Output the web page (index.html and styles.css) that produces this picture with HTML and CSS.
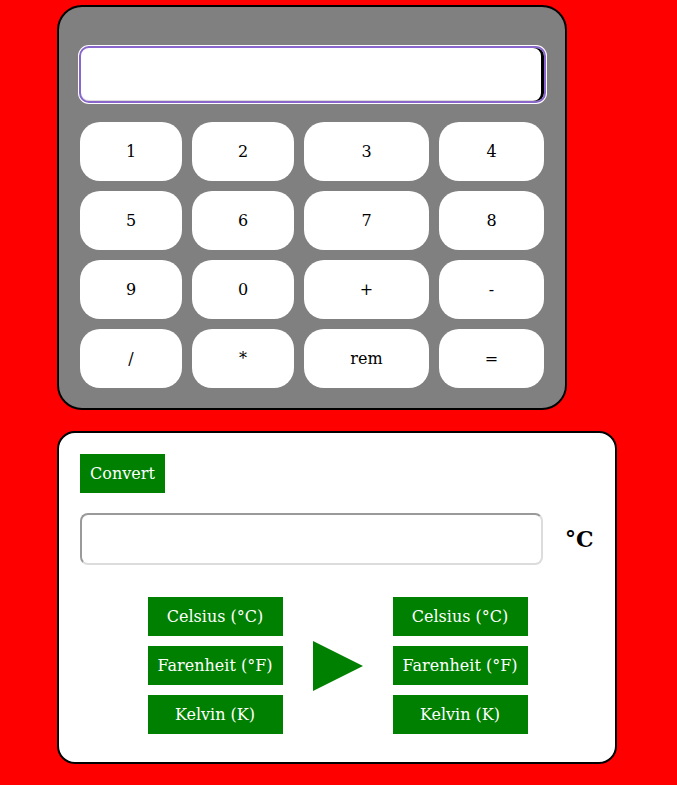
FILE: index.html
```html
<!DOCTYPE html>
<html lang="en">
<head>
<meta charset="utf-8">
<title>Calculator and Converter</title>
<link rel="stylesheet" href="styles.css">
</head>
<body>
<div class="page">
  <div class="calc">
    <input class="display" type="text" aria-label="display">
    <div class="keys">
      <button class="key">1</button>
      <button class="key">2</button>
      <button class="key">3</button>
      <button class="key">4</button>
      <button class="key">5</button>
      <button class="key">6</button>
      <button class="key">7</button>
      <button class="key">8</button>
      <button class="key">9</button>
      <button class="key">0</button>
      <button class="key">+</button>
      <button class="key">-</button>
      <button class="key">/</button>
      <button class="key">*</button>
      <button class="key">rem</button>
      <button class="key">=</button>
    </div>
  </div>
  <div class="conv">
    <button class="convert-btn">Convert</button>
    <div class="value-row">
      <input class="value" type="text" aria-label="value">
      <span class="unit">°C</span>
    </div>
    <div class="unit-row">
      <div class="unit-col">
        <button class="unit-btn">Celsius (°C)</button>
        <button class="unit-btn">Farenheit (°F)</button>
        <button class="unit-btn">Kelvin (K)</button>
      </div>
      <svg class="arrow" width="50" height="50" viewBox="0 0 50 50"><polygon points="0,0 50,25 0,50" fill="#008000"/></svg>
      <div class="unit-col">
        <button class="unit-btn">Celsius (°C)</button>
        <button class="unit-btn">Farenheit (°F)</button>
        <button class="unit-btn">Kelvin (K)</button>
      </div>
    </div>
  </div>
</div>
</body>
</html>
```
FILE: styles.css
```css
html, body {
  margin: 0;
  background: #ff0000;
  font-family: "DejaVu Serif", serif;
}

.page {
  display: flex;
  flex-direction: column;
  align-items: flex-start;
  gap: 21px;
  padding: 5px 0 0 57px;
}

.calc {
  box-sizing: border-box;
  width: 510px;
  border: 2px solid #000;
  border-radius: 25px;
  background: #808080;
  padding: 38px 21px 20px 21px;
}

.display {
  display: block;
  box-sizing: border-box;
  width: 467px;
  height: 57px;
  margin: 1px 0 19px -1px;
  padding: 0;
  border: 2px solid #8866cc;
  border-radius: 10px;
  background: #fff;
  box-shadow: 0 0 0 1px #fff, inset -3px 0 0 #000, inset 0 -1px 0 #dddddd;
  outline: none;
}

.keys {
  display: grid;
  grid-template-columns: 102px 102px 125px 105px;
  gap: 10px;
}

.key {
  height: 59px;
  border: none;
  border-radius: 20px;
  background: #fff;
  color: #000;
  font: 16px "DejaVu Serif", serif;
  padding: 0;
}

.conv {
  box-sizing: border-box;
  width: 560px;
  border: 2px solid #000;
  border-radius: 18px;
  background: #fff;
  padding: 21px 20px 28px 21px;
}

.convert-btn {
  display: block;
  width: 85px;
  height: 39px;
  border: none;
  padding: 0;
  background: #008000;
  color: #fff;
  font: 16px "DejaVu Serif", serif;
}

.value-row {
  display: flex;
  align-items: center;
  gap: 22px;
  margin-top: 20px;
}

.value {
  box-sizing: border-box;
  width: 463px;
  height: 52px;
  padding: 0;
  border: 2px solid;
  border-color: #9a9a9a #dcdcdc #dcdcdc #9a9a9a;
  border-radius: 8px;
  background: #fff;
  outline: none;
}

.unit {
  font: bold 22px "DejaVu Serif", serif;
  color: #000;
}

.unit-row {
  display: flex;
  justify-content: center;
  align-items: center;
  gap: 30px;
  margin-top: 32px;
}

.unit-col {
  display: flex;
  flex-direction: column;
  gap: 10px;
}

.unit-btn {
  width: 135px;
  height: 39px;
  border: none;
  padding: 0;
  background: #008000;
  color: #fff;
  font: 16px "DejaVu Serif", serif;
}

.arrow {
  display: block;
}
```
